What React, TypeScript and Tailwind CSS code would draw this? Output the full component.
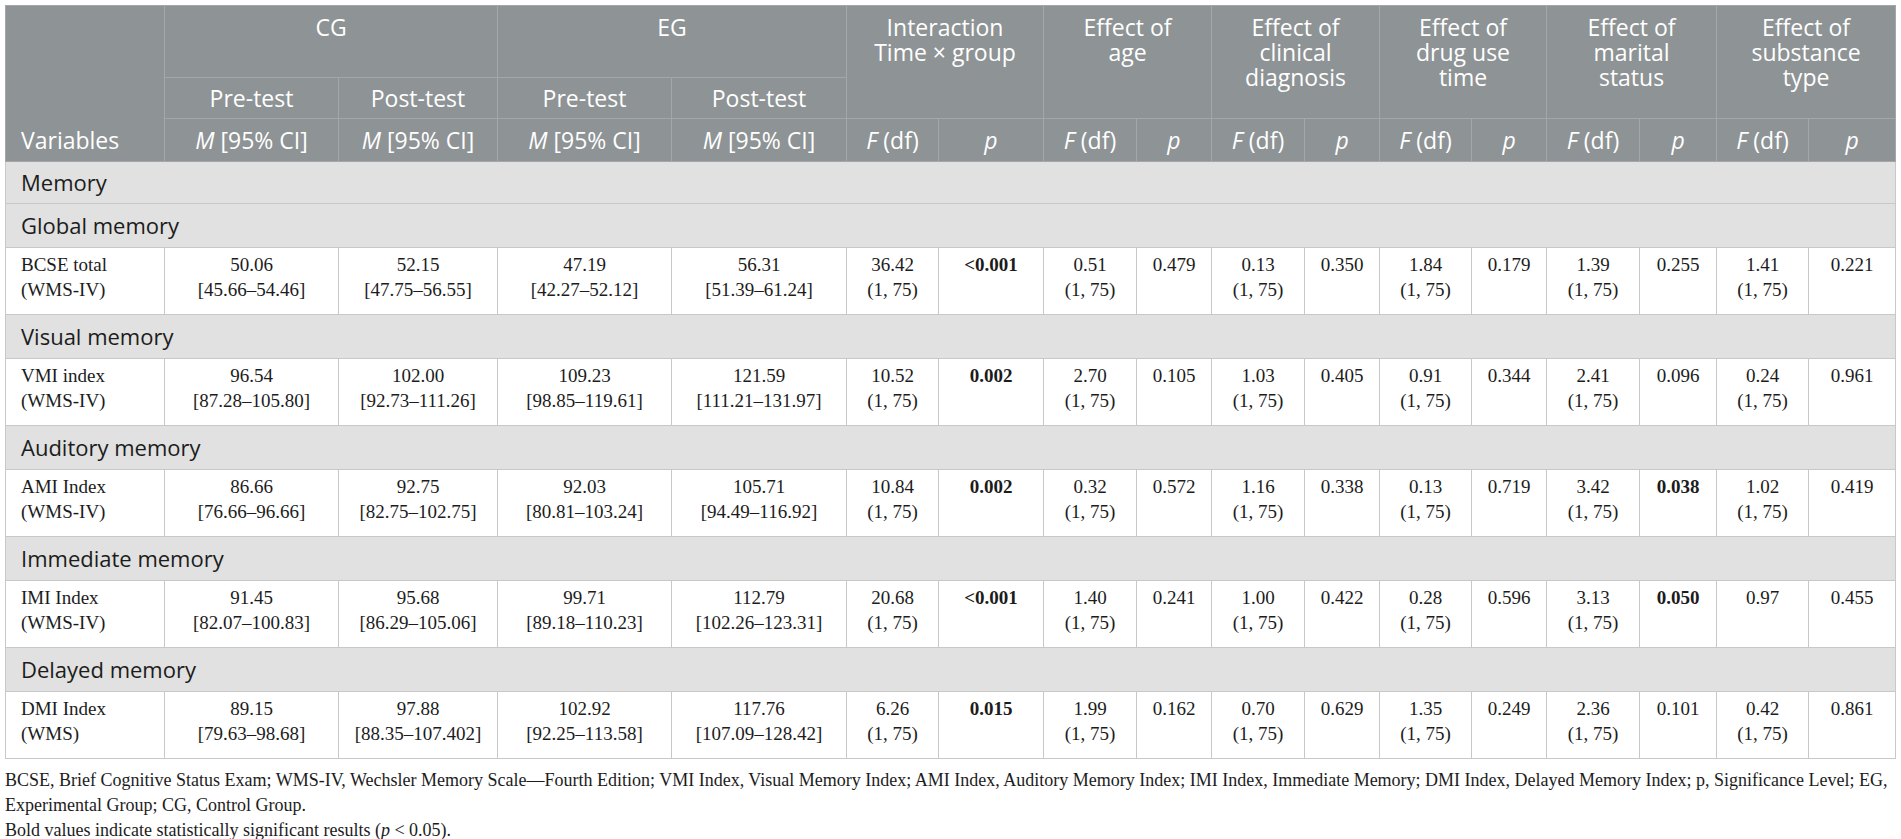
import React from "react";

type Cell = string | string[] | { b: string };

type Row =
	| { section: string; h?: string }
	| { label: [string, string]; cells: Cell[] };

const F = "(1, 75)";

const rows: Row[] = [
	{ section: "Memory", h: "h-[42px]" },
	{ section: "Global memory" },
	{
		label: ["BCSE total", "(WMS-IV)"],
		cells: [
			["50.06", "[45.66–54.46]"],
			["52.15", "[47.75–56.55]"],
			["47.19", "[42.27–52.12]"],
			["56.31", "[51.39–61.24]"],
			["36.42", F],
			{ b: "<0.001" },
			["0.51", F],
			"0.479",
			["0.13", F],
			"0.350",
			["1.84", F],
			"0.179",
			["1.39", F],
			"0.255",
			["1.41", F],
			"0.221",
		],
	},
	{ section: "Visual memory" },
	{
		label: ["VMI index", "(WMS-IV)"],
		cells: [
			["96.54", "[87.28–105.80]"],
			["102.00", "[92.73–111.26]"],
			["109.23", "[98.85–119.61]"],
			["121.59", "[111.21–131.97]"],
			["10.52", F],
			{ b: "0.002" },
			["2.70", F],
			"0.105",
			["1.03", F],
			"0.405",
			["0.91", F],
			"0.344",
			["2.41", F],
			"0.096",
			["0.24", F],
			"0.961",
		],
	},
	{ section: "Auditory memory" },
	{
		label: ["AMI Index", "(WMS-IV)"],
		cells: [
			["86.66", "[76.66–96.66]"],
			["92.75", "[82.75–102.75]"],
			["92.03", "[80.81–103.24]"],
			["105.71", "[94.49–116.92]"],
			["10.84", F],
			{ b: "0.002" },
			["0.32", F],
			"0.572",
			["1.16", F],
			"0.338",
			["0.13", F],
			"0.719",
			["3.42", F],
			{ b: "0.038" },
			["1.02", F],
			"0.419",
		],
	},
	{ section: "Immediate memory" },
	{
		label: ["IMI Index", "(WMS-IV)"],
		cells: [
			["91.45", "[82.07–100.83]"],
			["95.68", "[86.29–105.06]"],
			["99.71", "[89.18–110.23]"],
			["112.79", "[102.26–123.31]"],
			["20.68", F],
			{ b: "<0.001" },
			["1.40", F],
			"0.241",
			["1.00", F],
			"0.422",
			["0.28", F],
			"0.596",
			["3.13", F],
			{ b: "0.050" },
			"0.97",
			"0.455",
		],
	},
	{ section: "Delayed memory" },
	{
		label: ["DMI Index", "(WMS)"],
		cells: [
			["89.15", "[79.63–98.68]"],
			["97.88", "[88.35–107.402]"],
			["102.92", "[92.25–113.58]"],
			["117.76", "[107.09–128.42]"],
			["6.26", F],
			{ b: "0.015" },
			["1.99", F],
			"0.162",
			["0.70", F],
			"0.629",
			["1.35", F],
			"0.249",
			["2.36", F],
			"0.101",
			["0.42", F],
			"0.861",
		],
	},
];

const widths = [
	"w-[159px]",
	"w-[174px]",
	"w-[159px]",
	"w-[174px]",
	"w-[175px]",
	"w-[92px]",
	"w-[105px]",
	"w-[93px]",
	"w-[75px]",
	"w-[93px]",
	"w-[75px]",
	"w-[92px]",
	"w-[75px]",
	"w-[93px]",
	"w-[77px]",
	"w-[92px]",
	"w-[87px]",
];

const effects = [
	["Effect of", "age"],
	["Effect of", "clinical", "diagnosis"],
	["Effect of", "drug use", "time"],
	["Effect of", "marital", "status"],
	["Effect of", "substance", "type"],
];

const th = "border border-[#a3a7a9] font-normal";

const renderCell = (c: Cell, i: number) => {
	let content: React.ReactNode;
	if (typeof c === "string") content = c;
	else if (Array.isArray(c))
		content = (
			<>
				{c[0]}
				<br />
				{c[1]}
			</>
		);
	else content = <b className="font-bold">{c.b}</b>;
	return (
		<td
			key={i}
			className="border border-[#c8c8c8] text-center align-top pt-[4px] px-1"
		>
			{content}
		</td>
	);
};

export default function App() {
	return (
		<div className="bg-white min-h-screen pt-[5px] px-[5px] text-[#1c1c1c]">
			<table className="table-fixed border-collapse w-[1891px] border border-[#cfcfcf]">
				<colgroup>
					{widths.map((w, i) => (
						<col key={i} className={w} />
					))}
				</colgroup>
				<thead className="bg-[#8e9395] text-white font-['Open_Sans',sans-serif] text-[23px] leading-[25px]">
					<tr className="h-[72px]">
						<th rowSpan={3} className={`${th} text-left align-bottom pl-[15px] pb-[8px]`}>
							Variables
						</th>
						<th colSpan={2} className={`${th} align-top pt-[9px]`}>
							CG
						</th>
						<th colSpan={2} className={`${th} align-top pt-[9px]`}>
							EG
						</th>
						<th colSpan={2} rowSpan={2} className={`${th} align-top pt-[9px]`}>
							Interaction
							<br />
							Time × group
						</th>
						{effects.map((e, i) => (
							<th key={i} colSpan={2} rowSpan={2} className={`${th} align-top pt-[9px]`}>
								{e.map((l, j) => (
									<div key={j}>{l}</div>
								))}
							</th>
						))}
					</tr>
					<tr className="h-[41px]">
						<th className={th}>Pre-test</th>
						<th className={th}>Post-test</th>
						<th className={th}>Pre-test</th>
						<th className={th}>Post-test</th>
					</tr>
					<tr className="h-[43px]">
						{[0, 1, 2, 3].map((i) => (
							<th key={i} className={th}>
								<i>M</i> [95% CI]
							</th>
						))}
						{[0, 1, 2, 3, 4, 5].map((i) => (
							<React.Fragment key={i}>
								<th className={th}>
									<i>F</i> (df)
								</th>
								<th className={th}>
									<i>p</i>
								</th>
							</React.Fragment>
						))}
					</tr>
				</thead>
				<tbody className="font-['Liberation_Serif',serif] text-[19px] leading-[25px]">
					{rows.map((r, i) =>
						"section" in r ? (
							<tr key={i} className={`${r.h ?? "h-[44px]"} bg-[#e0e1e0]`}>
								<td
									colSpan={17}
									className="border border-[#c8c8c8] pl-[15px] font-['Open_Sans',sans-serif] text-[22px] text-[#1c1c1c]"
								>
									{r.section}
								</td>
							</tr>
						) : (
							<tr key={i} className="h-[67px]">
								<td className="border border-[#c8c8c8] align-top pt-[4px] pl-[15px]">
									{r.label[0]}
									<br />
									{r.label[1]}
								</td>
								{r.cells.map(renderCell)}
							</tr>
						),
					)}
				</tbody>
			</table>
			<div className="font-['Liberation_Serif',serif] text-[18px] leading-[25px] mt-[9px] text-[#1c1c1c] whitespace-nowrap">
				<p>
					BCSE, Brief Cognitive Status Exam; WMS-IV, Wechsler Memory Scale—Fourth Edition; VMI Index,
					Visual Memory Index; AMI Index, Auditory Memory Index; IMI Index, Immediate Memory; DMI Index,
					Delayed Memory Index; p, Significance Level; EG,
					<br />
					Experimental Group; CG, Control Group.
				</p>
				<p>
					Bold values indicate statistically significant results (<i>p</i> &lt; 0.05).
				</p>
			</div>
		</div>
	);
}
